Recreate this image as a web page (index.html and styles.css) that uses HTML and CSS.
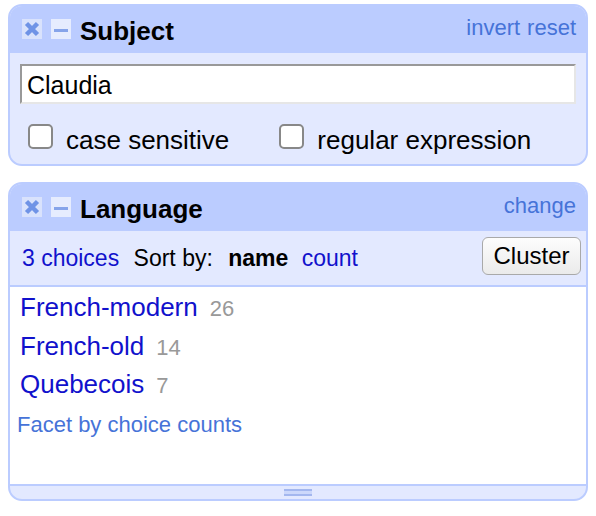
FILE: index.html
```html
<!DOCTYPE html>
<html lang="en">
<head>
  <meta charset="UTF-8">
  <title>Facets</title>
  <link rel="stylesheet" href="styles.css">
</head>
<body>
  <div class="facet">
    <div class="facet-title">
      <svg class="facet-icon" viewBox="0 0 20 20" width="20" height="20">
        <rect width="20" height="20" fill="#d9e2fc"/>
        <path d="M4.5 4.5 L15.5 15.5 M15.5 4.5 L4.5 15.5" stroke="#6f93e6" stroke-width="4.5"/>
      </svg>
      <svg class="facet-icon" viewBox="0 0 20 20" width="20" height="20">
        <rect width="20" height="20" fill="#e6ecfe"/>
        <rect x="3" y="10" width="14" height="3" fill="#86a4ea"/>
      </svg>
      <span class="facet-name">Subject</span>
      <span class="facet-links"><a href="#">invert</a><a href="#">reset</a></span>
    </div>
    <div class="facet-text-body">
      <input class="facet-input" type="text" value="Claudia">
      <div class="check-row">
        <label class="check"><input type="checkbox"><span class="case-label">case sensitive</span></label>
        <label class="check"><input type="checkbox"><span>regular expression</span></label>
      </div>
    </div>
  </div>

  <div class="facet">
    <div class="facet-title">
      <svg class="facet-icon" viewBox="0 0 20 20" width="20" height="20">
        <rect width="20" height="20" fill="#d9e2fc"/>
        <path d="M4.5 4.5 L15.5 15.5 M15.5 4.5 L4.5 15.5" stroke="#6f93e6" stroke-width="4.5"/>
      </svg>
      <svg class="facet-icon" viewBox="0 0 20 20" width="20" height="20">
        <rect width="20" height="20" fill="#e6ecfe"/>
        <rect x="3" y="10" width="14" height="3" fill="#86a4ea"/>
      </svg>
      <span class="facet-name">Language</span>
      <span class="facet-links"><a href="#">change</a></span>
    </div>
    <div class="facet-controls">
      <div class="sort-bar">
        <a href="#" class="choice-count">3 choices</a>
        <span class="sort-label">Sort by:</span>
        <span class="sort-active">name</span>
        <a href="#">count</a>
      </div>
      <button class="cluster-btn">Cluster</button>
    </div>
    <div class="facet-body">
      <div class="choice"><a href="#">French-modern</a><span class="count">26</span></div>
      <div class="choice"><a href="#">French-old</a><span class="count">14</span></div>
      <div class="choice"><a href="#">Quebecois</a><span class="count">7</span></div>
      <a href="#" class="facet-by-count">Facet by choice counts</a>
    </div>
    <div class="facet-footer"><div class="grip"></div></div>
  </div>
</body>
</html>
```

FILE: styles.css
```css
body {
  margin: 0;
  padding-top: 4px;
  font-family: "Liberation Sans", Arial, sans-serif;
  color: #000;
  background: #fff;
}
a {
  text-decoration: none;
}
.facet {
  margin: 0 8px 16px;
  border: 2px solid #bcf;
  border-radius: 14px;
  background: #e3e9ff;
  overflow: hidden;
}
.facet-title {
  display: flex;
  align-items: center;
  box-sizing: border-box;
  height: 47px;
  padding: 3px 10px 0 12px;
  background: #bcf;
}
.facet-icon {
  display: block;
  margin-right: 9px;
  margin-bottom: 5px;
}
.facet-name {
  font-size: 26px;
  font-weight: bold;
  flex: 1;
}
.facet-links {
  font-size: 22px;
  margin-bottom: 7px;
}
.facet-links a {
  color: #4673d8;
  margin-left: 7px;
}

/* text facet */
.facet-text-body {
  padding: 11px 10px 0;
}
.facet-input {
  display: block;
  box-sizing: border-box;
  width: 100%;
  height: 40px;
  margin: 0;
  padding: 2px 5px 0;
  font-family: inherit;
  font-size: 25px;
  color: #000;
  background: #fff;
  border: 2px solid;
  border-color: #999 #e6e6e6 #e6e6e6 #999;
  outline: none;
}
.check-row {
  display: flex;
  align-items: flex-start;
  height: 40px;
  margin-top: 20px;
  padding-left: 8px;
}
.check {
  display: flex;
  align-items: baseline;
  font-size: 26px;
  line-height: 24px;
}
.check input {
  appearance: none;
  -webkit-appearance: none;
  width: 25px;
  height: 25px;
  margin: 0 13px 0 0;
  border: 2px solid #888;
  border-radius: 5px;
  background: #fff;
}
.case-label {
  margin-right: 50px;
}

/* list facet */
.facet-controls {
  display: flex;
  align-items: flex-start;
  justify-content: space-between;
  box-sizing: border-box;
  height: 54px;
  padding: 6px 5px 0 12px;
}
.sort-bar {
  margin-top: 10px;
  font-size: 23px;
  line-height: 23px;
}
.sort-bar a {
  color: #11c;
}
.choice-count {
  margin-right: 8px;
}
.sort-label {
  margin-right: 9px;
}
.sort-active {
  font-weight: bold;
  margin-right: 7px;
}
.cluster-btn {
  width: 99px;
  height: 38px;
  padding: 0;
  font-family: inherit;
  font-size: 24px;
  color: #000;
  border: 1px solid #a9a9a9;
  border-radius: 6px;
  background: linear-gradient(#fdfdfd, #ebebeb);
}
.facet-body {
  height: 195px;
  padding-top: 2px;
  background: #fff;
  border-top: 2px solid #bcf;
  border-bottom: 2px solid #bcf;
}
.choice {
  padding-left: 10px;
  font-size: 26px;
  line-height: 37.5px;
}
.choice a {
  color: #11c;
}
.count {
  margin-left: 12px;
  font-size: 22px;
  color: #999;
}
.facet-by-count {
  display: block;
  margin-top: 7px;
  padding-left: 7px;
  font-size: 22px;
  line-height: 26px;
  color: #4673d8;
}
.facet-footer {
  display: flex;
  align-items: center;
  justify-content: center;
  height: 13px;
}
.grip {
  width: 28px;
  height: 3px;
  border-top: 2px solid #a3b7ef;
  border-bottom: 2px solid #a3b7ef;
  background: #ccd8fb;
}
```
